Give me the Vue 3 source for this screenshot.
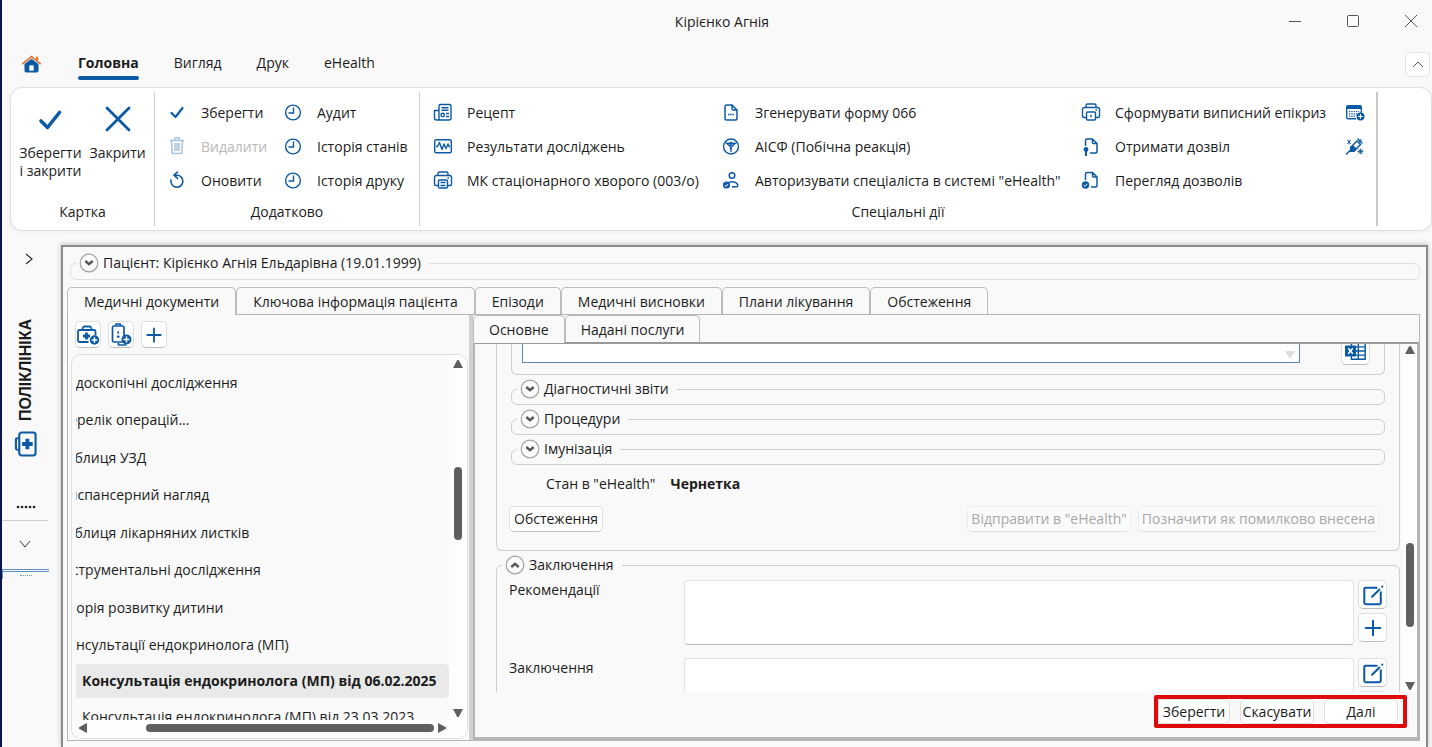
<script setup>
import { ref } from 'vue'

const menuTabs = ['Головна', 'Вигляд', 'Друк', 'eHealth']

const extraActions = [
  { icon: 'check', label: 'Зберегти' },
  { icon: 'clock', label: 'Аудит' },
  { icon: 'trash', label: 'Видалити', disabled: true },
  { icon: 'clock', label: 'Історія станів' },
  { icon: 'undo', label: 'Оновити' },
  { icon: 'clock', label: 'Історія друку' },
]

const specialActions = [
  { icon: 'recipe', label: 'Рецепт' },
  { icon: 'doc', label: 'Згенерувати форму 066' },
  { icon: 'printlock', label: 'Сформувати виписний епікриз' },
  { icon: 'calendar', title: 'Календар' },
  { icon: 'pulse', label: 'Результати досліджень' },
  { icon: 'caduceus', label: 'АІСФ (Побічна реакція)' },
  { icon: 'dockey', label: 'Отримати дозвіл' },
  { icon: 'vaccine', title: 'Вакцинація' },
  { icon: 'printer', label: 'МК стаціонарного хворого (003/о)' },
  { icon: 'usercheck', label: 'Авторизувати спеціаліста в системі "eHealth"' },
  { icon: 'doccheck', label: 'Перегляд дозволів' },
]

const pageTabs = [
  'Медичні документи',
  'Ключова інформація пацієнта',
  'Епізоди',
  'Медичні висновки',
  'Плани лікування',
  'Обстеження',
]
const innerTabs = ['Основне', 'Надані послуги']

const folders = [
  'Ендоскопічні дослідження',
  'Перелік операцій...',
  'Таблиця УЗД',
  'Диспансерний нагляд',
  'Таблиця лікарняних листків',
  'Інструментальні дослідження',
  'Історія розвитку дитини',
  'Консультації ендокринолога (МП)',
]

const sections = ['Діагностичні звіти', 'Процедури', 'Імунізація']

const recommendations = ref('')
const conclusion = ref('')
</script>

<template>
  <div class="window">
    <svg class="defs" aria-hidden="true">
      <symbol id="check" viewBox="0 0 24 24"><path d="M6.500 12l4 4 7-9" fill="none" stroke="currentColor" stroke-width="2.200" stroke-linecap="round" stroke-linejoin="round" /></symbol>
      <symbol id="bigcheck" viewBox="0 0 28 28"><path d="M5 16l6.500 6.500L23.500 7.500" fill="none" stroke="currentColor" stroke-width="3.600" stroke-linecap="round" stroke-linejoin="round" /></symbol>
      <symbol id="bigcross" viewBox="0 0 28 28"><path d="M3 3l22 22M25 3L3 25" fill="none" stroke="currentColor" stroke-width="2.800" stroke-linecap="round" /></symbol>
      <symbol id="clock" viewBox="0 0 24 24"><g fill="none" stroke="currentColor" stroke-width="1.400" stroke-linecap="round"><circle cx="12" cy="11.500" r="7.400" /><path d="M12.500 7V12H8" /></g></symbol>
      <symbol id="trash" viewBox="0 0 24 24"><g fill="none" stroke="currentColor" stroke-width="1.500" stroke-linejoin="round"><path d="M5 5.500h14M9.500 5V3h5v2M6.500 5.500l.7 13h9.600l.7-13M10 8v8M12 8v8M14 8v8" /></g></symbol>
      <symbol id="undo" viewBox="0 0 24 24"><g fill="none" stroke="currentColor" stroke-width="1.600" stroke-linecap="round" stroke-linejoin="round"><path d="M6 11A6 6 0 1 0 12.500 6.200H9.500M12.500 3L9 6.200l3.500 3.200" /></g></symbol>
      <symbol id="recipe" viewBox="0 0 24 24"><g fill="none" stroke="currentColor" stroke-width="1.400" stroke-linejoin="round"><path d="M8 19V5a1.500 1.500 0 0 1 1.500-1.500h9A1.500 1.500 0 0 1 20 5v12a2 2 0 0 1-2 2H5.500A2 2 0 0 1 3.500 17V9.500H8M10.500 6.700h7M10.500 9.200h7M15 12.500h3M15 15.500h3" /><circle cx="11.700" cy="14" r="1.700" /></g></symbol>
      <symbol id="pulse" viewBox="0 0 24 24"><g fill="none" stroke="currentColor" stroke-width="1.400" stroke-linejoin="round"><rect x="3.700" y="4.700" width="16.600" height="13" rx="1.500" /><path d="M5 11.500h1.500l2-4 2.500 7 2-5.500 2 4.500 2-4.500 1 2.500H19" /></g></symbol>
      <symbol id="printer" viewBox="0 0 24 24"><g fill="none" stroke="currentColor" stroke-width="1.400" stroke-linejoin="round"><path d="M7 6V4.500A1.500 1.500 0 0 1 8.500 3h7A1.500 1.500 0 0 1 17 4.500V6M7 16.500H5A1.500 1.500 0 0 1 3.500 15V8.500a2 2 0 0 1 2-2h13a2 2 0 0 1 2 2V15a1.500 1.500 0 0 1-1.500 1.500H17" /><rect x="7.500" y="11" width="9" height="8" rx="1" /><path d="M9.500 13.500h5M9.500 16.500h5M16.500 9h1.500" /></g></symbol>
      <symbol id="printlock" viewBox="0 0 24 24"><g fill="none" stroke="currentColor" stroke-width="1.400" stroke-linejoin="round"><path d="M7 6V4.500A1.500 1.500 0 0 1 8.500 3h7A1.500 1.500 0 0 1 17 4.500V6M7 16.500H5A1.500 1.500 0 0 1 3.500 15V8.500a2 2 0 0 1 2-2h13a2 2 0 0 1 2 2V15a1.500 1.500 0 0 1-1.500 1.500H17" /><rect x="7.500" y="11" width="9" height="8" rx="1" /><path d="M12 13.800v2.500M16.500 9h1.500" /></g></symbol>
      <symbol id="doc" viewBox="0 0 24 24"><g fill="none" stroke="currentColor" stroke-width="1.500" stroke-linejoin="round"><path d="M13 4H7.500A1.500 1.500 0 0 0 6 5.500v12A1.500 1.500 0 0 0 7.500 19h9a1.500 1.500 0 0 0 1.500-1.500V9zv3.500A1.500 1.500 0 0 0 14.500 9H18" /><path d="M9 13.500h6" stroke-dasharray="1.500 .7" /></g></symbol>
      <symbol id="caduceus" viewBox="0 0 24 24"><g fill="none" stroke="currentColor" stroke-width="1.400" stroke-linecap="round"><circle cx="12" cy="11.500" r="7.500" /><path d="M7.500 8.300h9L14 10.300h-4zM12 7v9.500" /><path d="M10 11.500c0 1 3.500 1.300 3 2.500M14 11.500c0 1-3.500 1.300-3 2.500" stroke-width=".9" /></g></symbol>
      <symbol id="usercheck" viewBox="0 0 24 24"><g fill="none" stroke="currentColor" stroke-width="1.500"><circle cx="13" cy="6.500" r="2.800" /><path d="M9.500 14c.8-1.700 7-1.800 8.800 1 .9 1.500.6 2.800-1 2.800H13" /></g><circle cx="7.500" cy="16" r="3.600" fill="currentColor" /><path d="M5.800 16.100l1.300 1.300 2-2.400" fill="none" stroke="#fff" /></symbol>
      <symbol id="dockey" viewBox="0 0 24 24"><g fill="none" stroke="currentColor" stroke-width="1.500" stroke-linejoin="round"><path d="M6.500 11V5.500A1.500 1.500 0 0 1 8 4h5.500L18 8.500v8a1.500 1.500 0 0 1-1.500 1.500H11M13.500 4v3.500a1 1 0 0 0 1 1H18" /><path d="M7 15v6" stroke-width="2" /></g><circle cx="7" cy="14.500" r="2.400" fill="currentColor" /></symbol>
      <symbol id="doccheck" viewBox="0 0 24 24"><g fill="none" stroke="currentColor" stroke-width="1.500" stroke-linejoin="round"><path d="M6.500 11V5A1.500 1.500 0 0 1 8 3.500h5.500L18 8v8.500a1.500 1.500 0 0 1-1.500 1.500H12M13.500 3.500V7a1 1 0 0 0 1 1H18" /></g><circle cx="6.500" cy="16" r="3.700" fill="currentColor" /><path d="M4.700 16.100L6 17.400l2.200-2.500" fill="none" stroke="#fff" /></symbol>
      <symbol id="calendar" viewBox="0 0 24 24"><path d="M3 8h16V6a2 2 0 0 0-2-2H5a2 2 0 0 0-2 2z" fill="currentColor" /><g fill="none" stroke="currentColor" stroke-width="1.400"><path d="M13 17.800H5A1.300 1.300 0 0 1 3.700 16.500V6M18.300 12V6" /><path d="M6 10.500h10M6 12.800h8M6 15.100h7" stroke-dasharray="1.300 1" stroke-width="1.200" /></g><circle cx="17.500" cy="15.500" r="4" fill="currentColor" /><path d="M15.200 15.500h4.600M17.500 13.200v4.600" stroke="#fff" stroke-width="1.200" /></symbol>
      <symbol id="vaccine" viewBox="0 0 24 24"><g fill="none" stroke="currentColor" stroke-linecap="round"><path d="M3.500 19l4-4M15 4l4 4M16.500 6.500l1.500-1.500" stroke-width="1.500" /><path d="M7.500 12.500l6.500-6.500 3.500 3.500-6.500 6.500z" stroke-width="1.500" /><path d="M4.500 5.500l3 3M7.500 5.500l-3 3M6 5v4M15.500 14.500l4 4M19.500 14.500l-4 4M17.500 14v5M15 16.500h5" stroke-width=".9" /></g><path d="M7 13l3-3 4 4-3 3H7z" fill="currentColor" /></symbol>
      <symbol id="plus" viewBox="0 0 24 24"><path d="M12 4v16M4 12h16" fill="none" stroke="currentColor" stroke-width="2.200" stroke-linecap="round" /></symbol>
      <symbol id="kitadd" viewBox="0 0 24 24"><g fill="none" stroke="currentColor" stroke-width="1.800" stroke-linejoin="round"><path d="M12.500 19H3.500A1.500 1.500 0 0 1 2 17.500v-9A1.500 1.500 0 0 1 3.500 7h14.500A1.500 1.500 0 0 1 19.500 8.500v4M6 7l1-2.500a1.500 1.500 0 0 1 1.500-1h5a1.500 1.500 0 0 1 1.500 1L16 7" /><path d="M10.500 9.500v7M7 13h7" stroke-width="2.800" /></g><circle cx="18.500" cy="17" r="4.700" fill="currentColor" /><path d="M15.700 17h5.600M18.500 14.200v5.600" stroke="#fff" stroke-width="1.500" /></symbol>
      <symbol id="clipadd" viewBox="0 0 24 24"><g fill="none" stroke="currentColor" stroke-width="1.700" stroke-linejoin="round"><rect x="3.500" y="3" width="11.500" height="16" rx="1.500" /><path d="M7 2.500V1h4.500v1.500M9.500 20v2h8" /><path d="M9.200 8v3M9.200 12.500v2.500M7.800 13.500h2.800" stroke-width="1.300" /></g><circle cx="17.500" cy="16.500" r="5" fill="currentColor" /><path d="M14.500 16.500h6M17.500 13.500v6" stroke="#fff" stroke-width="1.500" /></symbol>
      <symbol id="edit" viewBox="0 0 24 24"><g fill="none" stroke="currentColor" stroke-width="2.200" stroke-linecap="round" stroke-linejoin="round"><path d="M16 4H4a1.500 1.500 0 0 0-1.500 1.500v15A1.500 1.500 0 0 0 4 22h15a1.500 1.500 0 0 0 1.500-1.500V9M11 14l8-8M22 3l.2-.2" /></g></symbol>
      <symbol id="sheet" viewBox="0 0 24 24"><path d="M7 3h15v18H7zM7 7.500h15M7 12h15M7 16.500h15M14.500 3v18" fill="none" stroke="currentColor" stroke-width="1.600" /><rect x="0" y="6" width="12" height="12" fill="currentColor" /><path d="M3.500 9l5 6M8.500 9l-5 6" stroke="#fff" stroke-width="1.700" /></symbol>
      <symbol id="kit" viewBox="0 0 24 28"><g fill="none" stroke="currentColor" stroke-width="2.200"><rect x="5.500" y="2" width="17" height="24" rx="2.500" /><path d="M5 8H3.500A1.500 1.500 0 0 0 2 9.500v9A1.500 1.500 0 0 0 3.500 20H5" /></g><path d="M14 8.500v11M8.500 14h11" stroke="currentColor" stroke-width="4" /></symbol>
      <symbol id="home" viewBox="0 0 24 24"><path d="M4 11.500L12 5.500l8 6V19a2 2 0 0 1-2 2H6a2 2 0 0 1-2-2z" fill="#0c5aa6" /><path d="M9.500 19v-6h5v6z" fill="#fff" /><path d="M18.500 7V3" stroke="#e2762f" stroke-width="2.500" /><path d="M2 11L12 3l10 8" fill="none" stroke="#e2762f" stroke-width="1.900" stroke-linecap="round" /></symbol>
      <symbol id="chev" viewBox="0 0 20 20"><circle cx="10" cy="10" r="8.800" fill="#fbfbfb" stroke="#a3a3a3" stroke-width="1.200" /><path d="M6.300 8l3.700 3.200L13.700 8" fill="none" stroke="#555" stroke-width="2.400" /></symbol>
      <symbol id="up" viewBox="0 0 10 8"><path d="M4 .5a1.200 1.200 0 0 1 2 0l4 7.500H0z" fill="#606060" /></symbol>
    </svg>

    <header class="titlebar">
      <h1 class="caption">Кірієнко Агнія</h1>
      <div class="winbtns">
        <button aria-label="Згорнути"><svg viewBox="0 0 14 14"><path d="M1 6.500h12" stroke="#555" /></svg></button>
        <button aria-label="Розгорнути"><svg viewBox="0 0 14 14"><rect x="1.500" y=".5" width="11" height="11" rx="1" fill="none" stroke="#555" /></svg></button>
        <button aria-label="Закрити вікно"><svg viewBox="0 0 14 14"><path d="M1 0l12 12M13 0L1 12" stroke="#555" /></svg></button>
      </div>
    </header>

    <nav class="menu">
      <button class="home" aria-label="Додому"><svg><use href="#home" /></svg></button>
      <button v-for="(t, i) in menuTabs" :key="t" class="menutab" :class="{ on: i === 0 }">{{ t }}</button>
      <button class="fold" aria-label="Згорнути стрічку"><svg viewBox="0 0 12 12"><path d="M1 9l5-5 5 5" fill="none" stroke="#555" /></svg></button>
    </nav>

    <section class="ribbon">
      <div class="group card">
        <div class="big">
          <button><svg><use href="#bigcheck" /></svg><span>Зберегти<br>і закрити</span></button>
          <button><svg><use href="#bigcross" /></svg><span>Закрити</span></button>
        </div>
        <p class="grouplabel">Картка</p>
      </div>
      <div class="group extra">
        <div class="cells">
          <button v-for="a in extraActions" :key="a.label" :disabled="a.disabled"><svg><use :href="'#' + a.icon" /></svg>{{ a.label }}</button>
        </div>
        <p class="grouplabel">Додатково</p>
      </div>
      <div class="group special">
        <div class="cells">
          <button v-for="a in specialActions" :key="a.icon" :aria-label="a.title"><svg><use :href="'#' + a.icon" /></svg>{{ a.label }}</button>
        </div>
        <p class="grouplabel">Спеціальні дії</p>
      </div>
    </section>

    <div class="body">
      <aside class="side">
        <button class="expand" aria-label="Розгорнути панель"><svg viewBox="0 0 12 12"><path d="M3 1l6 5-6 5" fill="none" stroke="#333" stroke-width="1.200" /></svg></button>
        <button class="module"><span>ПОЛІКЛІНІКА</span><svg><use href="#kit" /></svg></button>
        <svg class="dots" viewBox="0 0 20 4"><path d="M2 2h.1M6 2h.1M10 2h.1M14 2h.1M18 2h.1" stroke="#222" stroke-width="2.600" stroke-linecap="round" /></svg>
        <button class="more" aria-label="Більше"><svg viewBox="0 0 12 12"><path d="M1 3l5 6 5-6" fill="none" stroke="#333" /></svg></button>
        <div class="grip"><i></i></div>
      </aside>

      <main class="panel">
        <fieldset class="patient">
          <legend><button aria-label="Розгорнути: Пацієнт"><svg><use href="#chev" /></svg></button>Пацієнт: Кірієнко Агнія Ельдарівна (19.01.1999)</legend>
        </fieldset>

        <div class="tabs outer" role="tablist">
          <button v-for="(t, i) in pageTabs" :key="t" role="tab" :aria-selected="i === 0" :class="{ on: i === 0 }">{{ t }}</button>
        </div>

        <div class="page">
          <section class="docs">
            <div class="tools">
              <button class="tool" aria-label="Додати епізод"><svg><use href="#kitadd" /></svg></button>
              <button class="tool" aria-label="Додати документ"><svg><use href="#clipadd" /></svg></button>
              <button class="tool" aria-label="Додати"><svg><use href="#plus" /></svg></button>
            </div>
            <div class="tree">
              <div class="rows">
                <ul class="folders">
                  <li v-for="f in folders" :key="f">{{ f }}</li>
                </ul>
                <div class="doc on">Консультація ендокринолога (МП) від 06.02.2025</div>
                <div class="doc cut">Консультація ендокринолога (МП) від 23.03.2023</div>
              </div>
              <div class="vbar treebar">
                <svg><use href="#up" /></svg><i></i><svg class="down"><use href="#up" /></svg>
              </div>
              <div class="hbar">
                <svg class="left"><use href="#up" /></svg><i></i><svg class="right"><use href="#up" /></svg>
              </div>
            </div>
          </section>

          <section class="detail">
            <div class="tabs inner" role="tablist">
              <button v-for="(t, i) in innerTabs" :key="t" role="tab" :aria-selected="i === 0" :class="{ on: i === 0 }">{{ t }}</button>
            </div>
            <div class="frame">
              <div class="scroller">
                <div class="form">
                  <div class="block first">
                    <div class="linked">
                      <select aria-label="Документ"></select>
                      <button class="sq" aria-label="Таблиця"><svg><use href="#sheet" /></svg></button>
                    </div>
                    <fieldset v-for="s in sections" :key="s" class="fold-set">
                      <legend><button :aria-label="'Розгорнути: ' + s"><svg><use href="#chev" /></svg></button>{{ s }}</legend>
                    </fieldset>
                    <p class="state"><span>Стан в "eHealth"</span><b>Чернетка</b></p>
                    <div class="acts">
                      <button class="btn">Обстеження</button>
                      <button class="btn push" disabled>Відправити в "eHealth"</button>
                      <button class="btn" disabled>Позначити як помилково внесена</button>
                    </div>
                  </div>
                  <fieldset class="summary">
                    <legend><button aria-label="Згорнути: Заключення"><svg class="flip"><use href="#chev" /></svg></button>Заключення</legend>
                    <div class="field">
                      <label for="rec">Рекомендації</label>
                      <textarea id="rec" v-model="recommendations"></textarea>
                      <div class="stack">
                        <button class="sq" aria-label="Редагувати рекомендації"><svg><use href="#edit" /></svg></button>
                        <button class="sq" aria-label="Додати рекомендацію"><svg><use href="#plus" /></svg></button>
                      </div>
                    </div>
                    <div class="field">
                      <label for="con">Заключення</label>
                      <textarea id="con" v-model="conclusion"></textarea>
                      <div class="stack">
                        <button class="sq" aria-label="Редагувати заключення"><svg><use href="#edit" /></svg></button>
                        <button class="sq" aria-label="Додати заключення"><svg><use href="#plus" /></svg></button>
                      </div>
                    </div>
                  </fieldset>
                </div>
                <div class="vbar formbar">
                  <svg><use href="#up" /></svg><i></i><svg class="down"><use href="#up" /></svg>
                </div>
              </div>
              <footer class="foot">
                <div class="marked">
                  <button class="btn">Зберегти</button>
                  <button class="btn">Скасувати</button>
                  <button class="btn">Далі</button>
                </div>
              </footer>
            </div>
          </section>
        </div>
      </main>
    </div>
  </div>
</template>

<style>
body { background: #f9f9f9; }
</style>

<style scoped>
* { box-sizing: border-box; }
.window {
  height: 100vh;
  min-height: 700px;
  display: flex;
  flex-direction: column;
  overflow: hidden;
  border-left: 2px solid #0a1550;
  background: #f9f9f9;
  color: #1c1c1c;
  font: 14px/18px "Open Sans", "Noto Sans", sans-serif;
}
.defs { position: absolute; width: 0; height: 0; }
button, select, textarea { font: inherit; color: inherit; }
button { border: 0; background: none; padding: 0; margin: 0; white-space: nowrap; }
svg { display: block; flex: none; }
p, h1, ul, fieldset { margin: 0; padding: 0; }
ul { list-style: none; }
i { display: block; }

.titlebar { display: grid; grid-template-columns: 1fr auto 1fr; align-items: center; height: 43px; flex: none; padding-right: 14px; }
.caption { grid-column: 2; font-size: 14px; font-weight: 400; padding-left: 24px; }
.winbtns { display: flex; justify-content: flex-end; gap: 44px; height: 18px; align-items: center; }
.winbtns svg { width: 14px; height: 14px; }

.menu { display: flex; align-items: center; height: 44px; flex: none; padding: 0 2px 2px 19px; }
.home svg { width: 21px; height: 21px; }
.home { margin-right: 36px; }
.menutab { height: 32px; margin-right: 35px; padding: 2px 0 4px; }
.menutab.on { position: relative; font-weight: 700; }
.menutab.on::after { content: ""; position: absolute; left: 0; right: 0; bottom: 0; height: 4px; border-radius: 2px; background: #0c5aa6; }
.fold { margin-left: auto; width: 25px; height: 25px; background: #fff; border: 1px solid #e2e2e2; border-radius: 5px; display: grid; place-items: center; }
.fold svg { width: 12px; height: 12px; }

.ribbon { display: flex; flex: none; margin: 0 0 0 8px; padding: 4px 0; height: 144px; border: 1px solid #dedede; border-radius: 12px; background: #fff; box-shadow: 0 1px 4px #0000000d; }
.group { border-right: 1px solid #cfcfcf; display: flex; flex-direction: column; flex: none; padding-top: 4px; }
.grouplabel { text-align: center; padding-top: 5px; }
.cells { display: grid; grid-auto-rows: 34px; }
.cells button { display: flex; align-items: center; gap: 12px; }
.cells svg { width: 24px; height: 24px; color: #0c5aa6; }
.cells button:disabled { color: #b9b9b9; }
.cells button:disabled svg { color: #a9c4de; }
.card { width: 144px; }
.big { display: flex; justify-content: center; gap: 8px; height: 102px; }
.big button { display: flex; flex-direction: column; align-items: center; padding-top: 9px; gap: 11px; }
.big svg { width: 28px; height: 28px; color: #0c5aa6; }
.extra { width: 265px; }
.extra .cells { grid-template-columns: 116px auto; padding-left: 10px; }
.special { width: 958px; border-right: 2px solid #c9cacb; }
.special .cells { grid-template-columns: 288px 360px 264px 24px; padding-left: 11px; }

.body { flex: 1; min-height: 0; display: flex; padding-top: 14px; }
.side { width: 59px; flex: none; display: flex; flex-direction: column; align-items: flex-start; }
.expand { padding: 8px 0 8px 21px; }
.expand svg, .more svg { width: 12px; height: 12px; }
.module { display: flex; flex-direction: column; align-items: center; gap: 9px; margin: 46px 0 0 12px; }
.module span { writing-mode: vertical-rl; transform: rotate(180deg); font: 700 16px/18px "Liberation Sans", sans-serif; }
.module svg { width: 23px; height: 28px; color: #0c5aa6; }
.dots { width: 20px; height: 4px; margin: 47px 0 0 14px; }
.more { width: 46px; margin-top: 11px; padding: 17px 0 0 17px; border-top: 1px solid #cfcfcf; }
.grip { width: 47px; margin-top: 19px; border-top: 1px solid #5f8fbd; border-left: 1px solid #5f8fbd; height: 10px; }
.grip i { border-top: 1px solid #5f8fbd; margin-top: 1px; height: 4px; }
.grip::after { content: ""; display: block; width: 12px; margin-left: 17px; border-top: 1px dotted #6a9ac5; }

.panel { flex: 1; min-width: 0; display: flex; flex-direction: column; margin-right: 4px; border: 2px solid #8b8b8b; border-bottom: 0; padding: 5px 6px 6px 4px; box-shadow: 0 -1px 5px #00000038; }

fieldset { border: 1px solid #cecece; border-radius: 6px; min-width: 0; }
legend { display: flex; align-items: center; gap: 4px; height: 22px; padding: 0 8px 0 3px; margin-left: 5px; }
legend svg { width: 20px; height: 20px; }
.flip { transform: rotate(180deg); }
.patient { margin: 0 0 7px 3px; height: 28px; border-color: #dfdfdf; flex: none; }

.tabs { display: flex; flex: none; }
.tabs button { height: 27px; padding: 1px 15px 0; border: 1px solid #bcbcbc; border-bottom: 0; border-radius: 5px 5px 0 0; background: #f9f9f9; }
.tabs .on { position: relative; margin-bottom: -1px; height: 28px; }
.outer button { padding: 1px 16px 0; }
.page { flex: 1; min-height: 0; display: flex; border: 1px solid #b4b4b4; }

.docs { width: 401px; flex: none; display: flex; flex-direction: column; }
.tools { display: flex; gap: 7px; padding: 6px 7px; }
.tool { width: 26px; height: 27px; background: #fff; border: 1px solid #dedede; border-bottom-color: #bdbdbd; border-radius: 5px; display: grid; place-items: center; color: #0c5aa6; }
.tool svg { width: 24px; height: 24px; }
.tool:last-child svg { width: 20px; height: 20px; }
.tree { flex: 1; min-height: 0; margin: 0 1px 1px 3px; border: 1px solid #dedede; border-radius: 10px; display: grid; grid-template: minmax(0, 1fr) 18px / minmax(0, 1fr) 18px; overflow: hidden; }
.rows { display: flex; flex-direction: column; overflow: hidden; margin-left: 4px; padding-top: 9px; }
.folders { flex: 1; display: flex; flex-direction: column; margin-left: -17px; }
.folders li { flex: 1; display: flex; align-items: center; white-space: nowrap; }
.doc { flex: none; height: 34px; line-height: 34px; padding-left: 6px; white-space: nowrap; }
.doc.on { background: #e9e9e9; font-weight: 700; border-radius: 0 5px 5px 0; }
.doc.cut { height: 22px; line-height: 38px; overflow: hidden; }
.vbar { background: #fdfdfd; display: flex; flex-direction: column; align-items: center; padding: 5px 0; }
.vbar svg { width: 10px; height: 8px; }
.vbar i { width: 8px; border-radius: 4px; background: #606060; margin-bottom: auto; }
.down { transform: rotate(180deg); }
.treebar i { height: 73px; margin-top: 99px; }
.treebar { padding-bottom: 3px; }
.hbar { grid-column: 1 / 3; background: #fdfdfd; display: flex; align-items: center; padding: 0 20px 2px 6px; }
.hbar svg { width: 10px; height: 8px; }
.hbar i { height: 8px; flex: 1; margin: 0 3px 0 58px; border-radius: 4px; background: #606060; }
.left { transform: rotate(-90deg); }
.right { transform: rotate(90deg); }

.detail { flex: 1; min-width: 0; display: flex; flex-direction: column; border-left: 4px solid #cfd0d1; }
.frame { flex: 1; min-height: 0; display: flex; flex-direction: column; border: 2px solid #b3b5b8; border-top-color: #97999b; border-bottom-width: 3px; }
.scroller { flex: 1; min-height: 0; display: flex; overflow: hidden; }
.form { flex: 1; min-width: 0; padding: 0 2px 0 21px; overflow: hidden; }
.block { border: 1px solid #cecece; border-top: 0; border-radius: 0 0 6px 6px; padding: 0 14px 18px; }
.linked { position: relative; display: flex; justify-content: space-between; align-items: flex-start; height: 31px; margin-bottom: 3px; padding: 0 14px 0 10px; border: 1px solid #cecece; border-top: 0; border-radius: 0 0 6px 6px; }
.linked select { flex: 1; height: 19px; margin-right: 41px; border: 1px solid #6289ad; border-top: 0; border-radius: 0; appearance: none; background: #fff; }
.linked::after { content: ""; position: absolute; right: 89px; top: 7px; border: 5px solid transparent; border-top: 8px solid #dedede; border-bottom: 0; }
.linked .sq { height: 21px; border-top: 0; border-radius: 0 0 5px 5px; place-items: start center; overflow: hidden; }
.linked svg { width: 22px; height: 22px; margin-top: -4px; }
.fold-set { margin-bottom: 3px; padding-bottom: 4px; }
.state { display: flex; gap: 15px; padding: 7px 0 0 35px; margin-bottom: 13px; }
.acts { display: flex; gap: 7px; margin: 0 6px 0 -2px; }
.btn { height: 26px; padding: 0 4px; border: 1px solid #dedede; border-bottom-color: #c3c3c3; border-radius: 5px; background: #fff; }
.btn:disabled { color: #a8a8a8; background: #fbfbfb; border-color: #ececec; border-bottom-color: #dfdfdf; padding: 0 3px; }
.push { margin-left: auto; }
.summary { margin-top: 3px; padding: 0 13px 8px 12px; }
.summary legend { margin-left: -7px; }
.field { display: grid; grid-template-columns: 175px minmax(0, 1fr) 28px; margin: 4px 0 13px; }
.field + .field { margin-top: 0; }
.field label { padding-top: 1px; }
.field textarea { resize: none; height: 65px; margin-right: 4px; padding: 4px; border: 1px solid #e2e2e2; border-bottom-color: #b9b9b9; border-radius: 4px; background: #fff; outline: 0; }
.stack { display: flex; flex-direction: column; gap: 4px; }
.sq { width: 29px; height: 29px; background: #fff; border: 1px solid #dedede; border-bottom-color: #bdbdbd; border-radius: 5px; display: grid; place-items: center; color: #0c5aa6; }
.sq svg { width: 22px; height: 22px; }
.formbar { width: 15px; flex: none; padding: 2px 0; }
.formbar i { height: 84px; margin-top: 189px; }
.foot { flex: none; display: flex; justify-content: flex-end; padding: 3px 10px 9px; }
.marked { display: flex; gap: 10px; border: 4px solid #df0a0a; border-radius: 2px; padding: 0 5px 0 0; }
.marked .btn { height: 25px; width: 74px; border-color: #dedede; padding: 0; }
.marked .btn:first-child { width: 72px; }
</style>
